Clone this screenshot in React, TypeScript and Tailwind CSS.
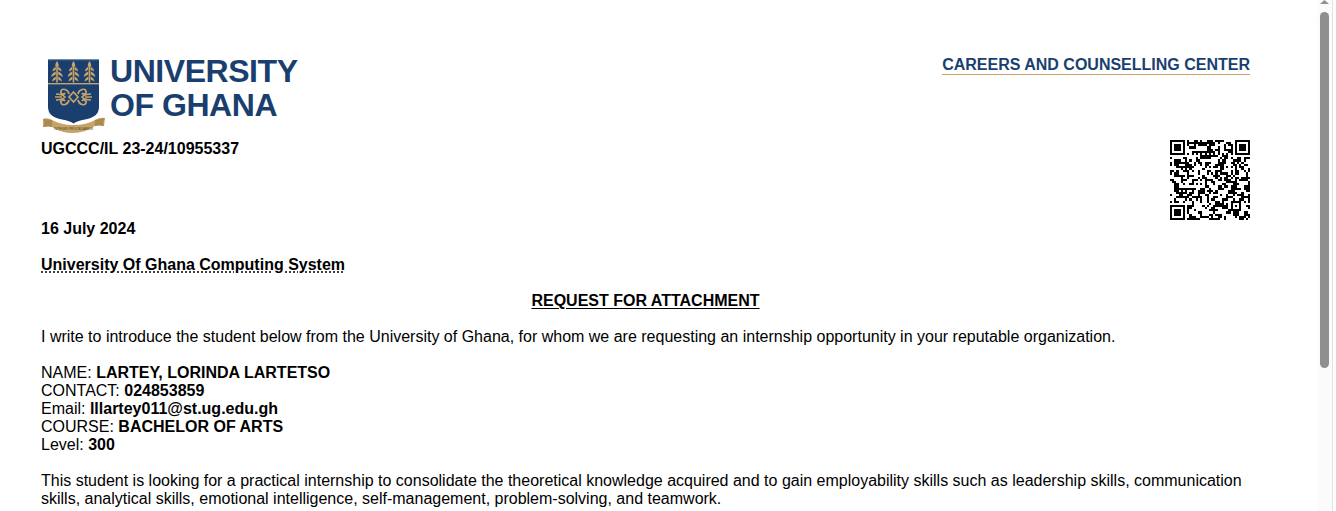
import React from 'react';

const SANS = { fontFamily: '"Liberation Sans", Arial, sans-serif' };

const QR_SIZE = 37;

// the three corner squares
function inFinder(x: number, y: number, ox: number, oy: number) {
  const dx = x - ox;
  const dy = y - oy;
  if (dx < 0 || dy < 0 || dx > 6 || dy > 6) return false;
  return dx === 0 || dy === 0 || dx === 6 || dy === 6 || (dx >= 2 && dx <= 4 && dy >= 2 && dy <= 4);
}

function buildQr() {
  const cells: { x: number; y: number }[] = [];
  const grid: boolean[][] = [];
  let seed = 48271;
  for (let y = 0; y < QR_SIZE; y++) {
    grid.push([]);
    for (let x = 0; x < QR_SIZE; x++) {
      seed = (seed * 16807) % 2147483647;
      const corner = (x < 8 && y < 8) || (x > 28 && y < 8) || (x < 8 && y > 28);
      const inAlign = x >= 28 && x <= 32 && y >= 28 && y <= 32;
      // lean a little towards the cell on the left and above, so the modules clump
      const left = x > 0 && grid[y][x - 1] ? 6 : -6;
      const up = y > 0 && grid[y - 1][x] ? 6 : -6;
      let on = seed % 100 < 50 + left + up;
      if (corner) {
        on = inFinder(x, y, 0, 0) || inFinder(x, y, 30, 0) || inFinder(x, y, 0, 30);
      } else if (inAlign) {
        on = x === 28 || x === 32 || y === 28 || y === 32 || (x === 30 && y === 30);
      } else if (y === 6) {
        on = x % 2 === 0;
      } else if (x === 6) {
        on = y % 2 === 0;
      }
      grid[y].push(on);
      if (on) cells.push({ x, y });
    }
  }
  return cells;
}

const QR_CELLS = buildQr();

function QrCode() {
  return (
    <svg width="80" height="80" viewBox="0 0 37 37" shapeRendering="crispEdges">
      {QR_CELLS.map((c) => (
        <rect key={`${c.x}-${c.y}`} x={c.x} y={c.y} width="1" height="1" fill="#000" />
      ))}
    </svg>
  );
}

function Tree({ x }: { x: number }) {
  return (
    <g transform={`translate(${x} 0)`} fill="#c6a468">
      <rect x="-0.8" y="9" width="1.6" height="18.5" />
      <path d="M0 6 C1.5 8 2 10 1.5 12 L0 11 L-1.5 12 C-2 10 -1.5 8 0 6 Z" />
      <path d="M1.2 12 C3 12.5 4.5 14 4.5 16.5 L1.2 14.8 Z M-1.2 12 C-3 12.5 -4.5 14 -4.5 16.5 L-1.2 14.8 Z" />
      <path d="M1.2 16.5 C3 17 5.5 19 6 22 L1.2 19.6 Z M-1.2 16.5 C-3 17 -5.5 19 -6 22 L-1.2 19.6 Z" />
      <path d="M1.2 21.5 C3 22 4.5 24 5 26.5 L1.2 24.6 Z M-1.2 21.5 C-3 22 -4.5 24 -5 26.5 L-1.2 24.6 Z" />
    </g>
  );
}

// crest with the three trees and the scroll under it
function Crest() {
  return (
    <svg width="66" height="80" viewBox="0 0 66 80" className="shrink-0">
      <path d="M7 4 H58 V52 Q58 62 44 64.5 Q36 66 32.5 68.5 Q29 66 21 64.5 Q7 62 7 52 Z" fill="#1a3f6f" />
      <rect x="7" y="4" width="51" height="1.2" fill="#6f8aac" />
      <rect x="7" y="28" width="51" height="1.4" fill="#c6a468" />
      <Tree x={16} />
      <Tree x={32.5} />
      <Tree x={48.5} />
      <g fill="none" stroke="#c6a468" strokeWidth="1.7">
        <path d="M28 39 C27 34 21 33 20 36 C19 39 23 40 24 38" />
        <path d="M37 39 C38 34 44 33 45 36 C46 39 42 40 41 38" />
        <path d="M28 45 C27 50 21 51 20 48 C19 45 23 44 24 46" />
        <path d="M37 45 C38 50 44 51 45 48 C46 45 42 44 41 46" />
        <path d="M32.5 37 L37 42 L32.5 47 L28 42 Z" />
        <path d="M21 42 H14 M15 39 Q21 39 24 42 Q21 45 15 45" />
        <path d="M44 42 H51 M50 39 Q44 39 41 42 Q44 45 50 45" />
      </g>
      <path d="M2 64 Q6 62 11 65 Q20 70 32 70 Q46 70 54 65 Q59 62 64 63 L63 71 Q58 69 54 71 Q44 78 32 78 Q20 78 11 72 Q7 70 2 72 Z" fill="#c6a468" />
      <path d="M2 64 Q5 68 2 72 Q8 71 11 72 L11 65 Z" fill="#a88a52" />
      <path d="M64 63 Q61 67 63 71 Q58 70 54 71 L54 65 Z" fill="#a88a52" />
      <text x="32.5" y="75" textAnchor="middle" fontSize="3.4" fill="#4a3c22">INTEGRI PROCEDAMUS</text>
    </svg>
  );
}

function Scrollbar() {
  return (
    <div className="fixed right-0 top-0 bottom-0 w-[19px] bg-white">
      <div className="w-[16px] h-full bg-[#fbfbfb] border-r border-[#e2e2e2] flex flex-col items-center">
        <svg width="15" height="12" viewBox="0 0 15 12" className="shrink-0">
          <path d="M7.5 0 L12 4 H3 Z" fill="#8f8f8f" />
        </svg>
        <div className="w-[9px] h-[356px] bg-[#8f8f8f] rounded-[5px] shrink-0" />
      </div>
    </div>
  );
}

export default function App() {
  return (
    <div className="h-[511px] overflow-hidden bg-white text-black text-[16px] leading-[18px]" style={SANS}>
      <Scrollbar />
      <div className="w-[1209px] ml-[41px] pt-[55px]">
        <div className="flex justify-between items-start">
          <div className="flex items-start h-[78px]">
            <Crest />
            <div className="ml-[3px] mt-[-1px] text-[#1a3f6f] font-bold text-[32px] leading-[34px] tracking-[-0.45px]">
              <div>UNIVERSITY</div>
              <div>OF GHANA</div>
            </div>
          </div>
          <div className="text-[#1a3f6f] font-bold leading-[18px] mt-px border-b border-[#c6a468]">CAREERS AND COUNSELLING CENTER</div>
        </div>

        <div className="flex justify-between items-start mt-[7px]">
          <b>UGCCC/IL 23-24/10955337</b>
          <QrCode />
        </div>

        <div className="font-bold">16 July 2024</div>
        <div className="font-bold mt-[18px]">
          <span className="underline decoration-dotted underline-offset-2">University Of Ghana Computing System</span>
        </div>
        <div className="font-bold mt-[18px] text-center">
          <span className="underline underline-offset-2">REQUEST FOR ATTACHMENT</span>
        </div>

        <p className="mt-[18px]">I write to introduce the student below from the University of Ghana, for whom we are requesting an internship opportunity in your reputable organization.</p>

        <div className="mt-[18px]">
          <div>NAME: <b>LARTEY, LORINDA LARTETSO</b></div>
          <div>CONTACT: <b>024853859</b></div>
          <div>Email: <b>lllartey011@st.ug.edu.gh</b></div>
          <div>COURSE: <b>BACHELOR OF ARTS</b></div>
          <div>Level: <b>300</b></div>
        </div>

        <p className="mt-[18px]">This student is looking for a practical internship to consolidate the theoretical knowledge acquired and to gain employability skills such as leadership skills, communication skills, analytical skills, emotional intelligence, self-management, problem-solving, and teamwork.</p>
      </div>
    </div>
  );
}
